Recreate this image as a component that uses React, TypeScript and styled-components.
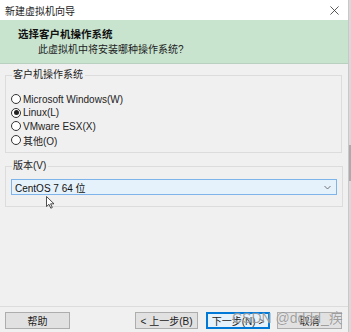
import React from 'react';
import styled, { createGlobalStyle } from 'styled-components';

const GlobalStyle = createGlobalStyle`
  html, body {
    margin: 0;
    padding: 0;
    background: #f0f0f0;
  }
  * {
    box-sizing: border-box;
  }
`;

const FONT = `"Liberation Sans", "Noto Sans CJK SC", sans-serif`;

const Frame = styled.div`
  width: 351px;
  height: 332px;
  display: flex;
  flex-direction: row;
  overflow: hidden;
  font-family: ${FONT};
  font-size: 10px;
  color: #1a1a1a;
  position: relative;
`;

const Dialog = styled.div`
  width: 348px;
  height: 332px;
  display: flex;
  flex-direction: column;
  background: #f0f0f0;
`;

const EdgeStrip = styled.div`
  width: 3px;
  display: flex;
  flex-direction: column;
  background: #d9d9d9;
  border-left: 1px solid #c8c8c8;
`;

const EdgeThumb = styled.div<{ top: number; size: number }>`
  margin-top: ${({ top }) => top}px;
  height: ${({ size }) => size}px;
  background: #ababab;
`;

const TitleBar = styled.div`
  height: 20px;
  background: #ffffff;
  display: flex;
  align-items: center;
  justify-content: space-between;
  padding: 0 9px 0 5px;
  font-size: 10px;
  color: #222;
`;

const CloseIcon = styled.svg`
  width: 9px;
  height: 9px;
`;

const Banner = styled.div`
  height: 44px;
  background: #c8e4cf;
  border-bottom: 1px solid #b9cfc0;
  display: flex;
  flex-direction: column;
  justify-content: center;
  gap: 2px;
  padding-left: 18px;
`;

const BannerTitle = styled.div`
  font-weight: 700;
  font-size: 10.5px;
  color: #111;
  line-height: 13px;
`;

const BannerSub = styled.div`
  padding-left: 20px;
  font-size: 10px;
  color: #222;
  line-height: 13px;
`;

const Body = styled.div`
  flex: 1;
  display: flex;
  flex-direction: column;
  padding: 5px 6px 0 5px;
  gap: 7px;
`;

const Group = styled.fieldset<{ height: number }>`
  margin: 0;
  padding: 0 5px;
  height: ${({ height }) => height}px;
  border: 1px solid #dcdcdc;
  border-radius: 0;
  display: flex;
  flex-direction: column;
`;

const Legend = styled.legend`
  padding: 0 2px 0 1px;
  margin-left: 1px;
  font-size: 10px;
  line-height: 12px;
  color: #222;
`;

const RadioList = styled.div`
  display: flex;
  flex-direction: column;
  padding-top: 11.5px;
`;

const RadioRow = styled.label`
  display: flex;
  align-items: center;
  gap: 2px;
  height: 13.6px;
  font-size: 10px;
  color: #222;
  white-space: nowrap;
`;

const RadioDot = styled.span<{ checked: boolean }>`
  width: 10px;
  height: 10px;
  border-radius: 50%;
  border: 1px solid #333;
  background: #fff;
  display: flex;
  align-items: center;
  justify-content: center;
  &::after {
    content: '';
    width: 5px;
    height: 5px;
    border-radius: 50%;
    background: ${({ checked }) => (checked ? '#222' : 'transparent')};
  }
`;

const Combo = styled.div`
  margin-top: 7px;
  height: 16px;
  width: 326px;
  border: 1px solid #7eb4ea;
  background: #e5f1fb;
  display: flex;
  align-items: center;
  justify-content: space-between;
  padding: 0 5px 0 3px;
  font-size: 10px;
  color: #111;
  white-space: nowrap;
`;

const Chevron = styled.svg`
  width: 7px;
  height: 5px;
`;

const Footer = styled.div`
  height: 26px;
  border-top: 1px solid #dcdcdc;
  display: flex;
  align-items: flex-start;
  padding: 5px 6px 0 5px;
`;

const Button = styled.div<{ primary?: boolean; width: number }>`
  width: ${({ width }) => width}px;
  height: 17px;
  background: ${({ primary }) => (primary ? '#e5f1fb' : '#e1e1e1')};
  border: 1px solid ${({ primary }) => (primary ? '#0078d7' : '#adadad')};
  box-shadow: ${({ primary }) => (primary ? 'inset 0 0 0 1px #0078d7' : 'none')};
  display: flex;
  align-items: center;
  justify-content: center;
  font-size: 10px;
  color: #222;
  white-space: nowrap;
`;

const ButtonGap = styled.div<{ size: number }>`
  width: ${({ size }) => size}px;
  flex: ${({ size }) => (size === 0 ? 1 : 'none')};
`;

const Watermark = styled.div`
  position: absolute;
  left: 232px;
  top: 310px;
  font-family: "Liberation Sans", "Noto Sans CJK SC", sans-serif;
  font-size: 14px;
  line-height: 16px;
  color: rgba(120, 120, 120, 0.7);
  text-shadow: 0 0 1px rgba(255, 255, 255, 0.8);
  pointer-events: none;
  white-space: nowrap;
`;

const Cursor = styled.svg`
  position: absolute;
  left: 46px;
  top: 196px;
  width: 9px;
  height: 13px;
`;

const options = [
  { label: 'Microsoft Windows(W)', checked: false },
  { label: 'Linux(L)', checked: true },
  { label: 'VMware ESX(X)', checked: false },
  { label: '其他(O)', checked: false },
];

const App = () => {
  return (
    <>
      <GlobalStyle />
      <Frame>
        <Dialog>
          <TitleBar>
            <span>新建虚拟机向导</span>
            <CloseIcon viewBox="0 0 10 10">
              <path d="M0.5 0.5 L9.5 9.5 M9.5 0.5 L0.5 9.5" stroke="#333" strokeWidth="0.9" fill="none" />
            </CloseIcon>
          </TitleBar>
          <Banner>
            <BannerTitle>选择客户机操作系统</BannerTitle>
            <BannerSub>此虚拟机中将安装哪种操作系统?</BannerSub>
          </Banner>
          <Body>
            <Group height={84}>
              <Legend>客户机操作系统</Legend>
              <RadioList>
                {options.map((o) => (
                  <RadioRow key={o.label}>
                    <RadioDot checked={o.checked} />
                    {o.label}
                  </RadioRow>
                ))}
              </RadioList>
            </Group>
            <Group height={47}>
              <Legend>版本(V)</Legend>
              <Combo>
                <span>CentOS 7 64 位</span>
                <Chevron viewBox="0 0 7 5">
                  <path d="M0.5 1 L3.5 4 L6.5 1" stroke="#555" strokeWidth="0.8" fill="none" />
                </Chevron>
              </Combo>
            </Group>
          </Body>
          <Footer>
            <Button width={65}>帮助</Button>
            <ButtonGap size={0} />
            <Button width={63}>&lt; 上一步(B)</Button>
            <ButtonGap size={8} />
            <Button width={64} primary>下一步(N) &gt;</Button>
            <ButtonGap size={7} />
            <Button width={65}>取消</Button>
          </Footer>
        </Dialog>
        <EdgeStrip>
          <EdgeThumb top={145} size={36} />
        </EdgeStrip>
        <Watermark>CSDN @dddd_疾</Watermark>
        <Cursor viewBox="0 0 9 13">
          <path d="M0.5 0.5 L0.5 10.5 L3 8.3 L4.8 12.2 L6.3 11.5 L4.6 7.8 L8 7.8 Z" fill="#fff" stroke="#222" strokeWidth="0.8" />
        </Cursor>
      </Frame>
    </>
  );
};

export default App;
